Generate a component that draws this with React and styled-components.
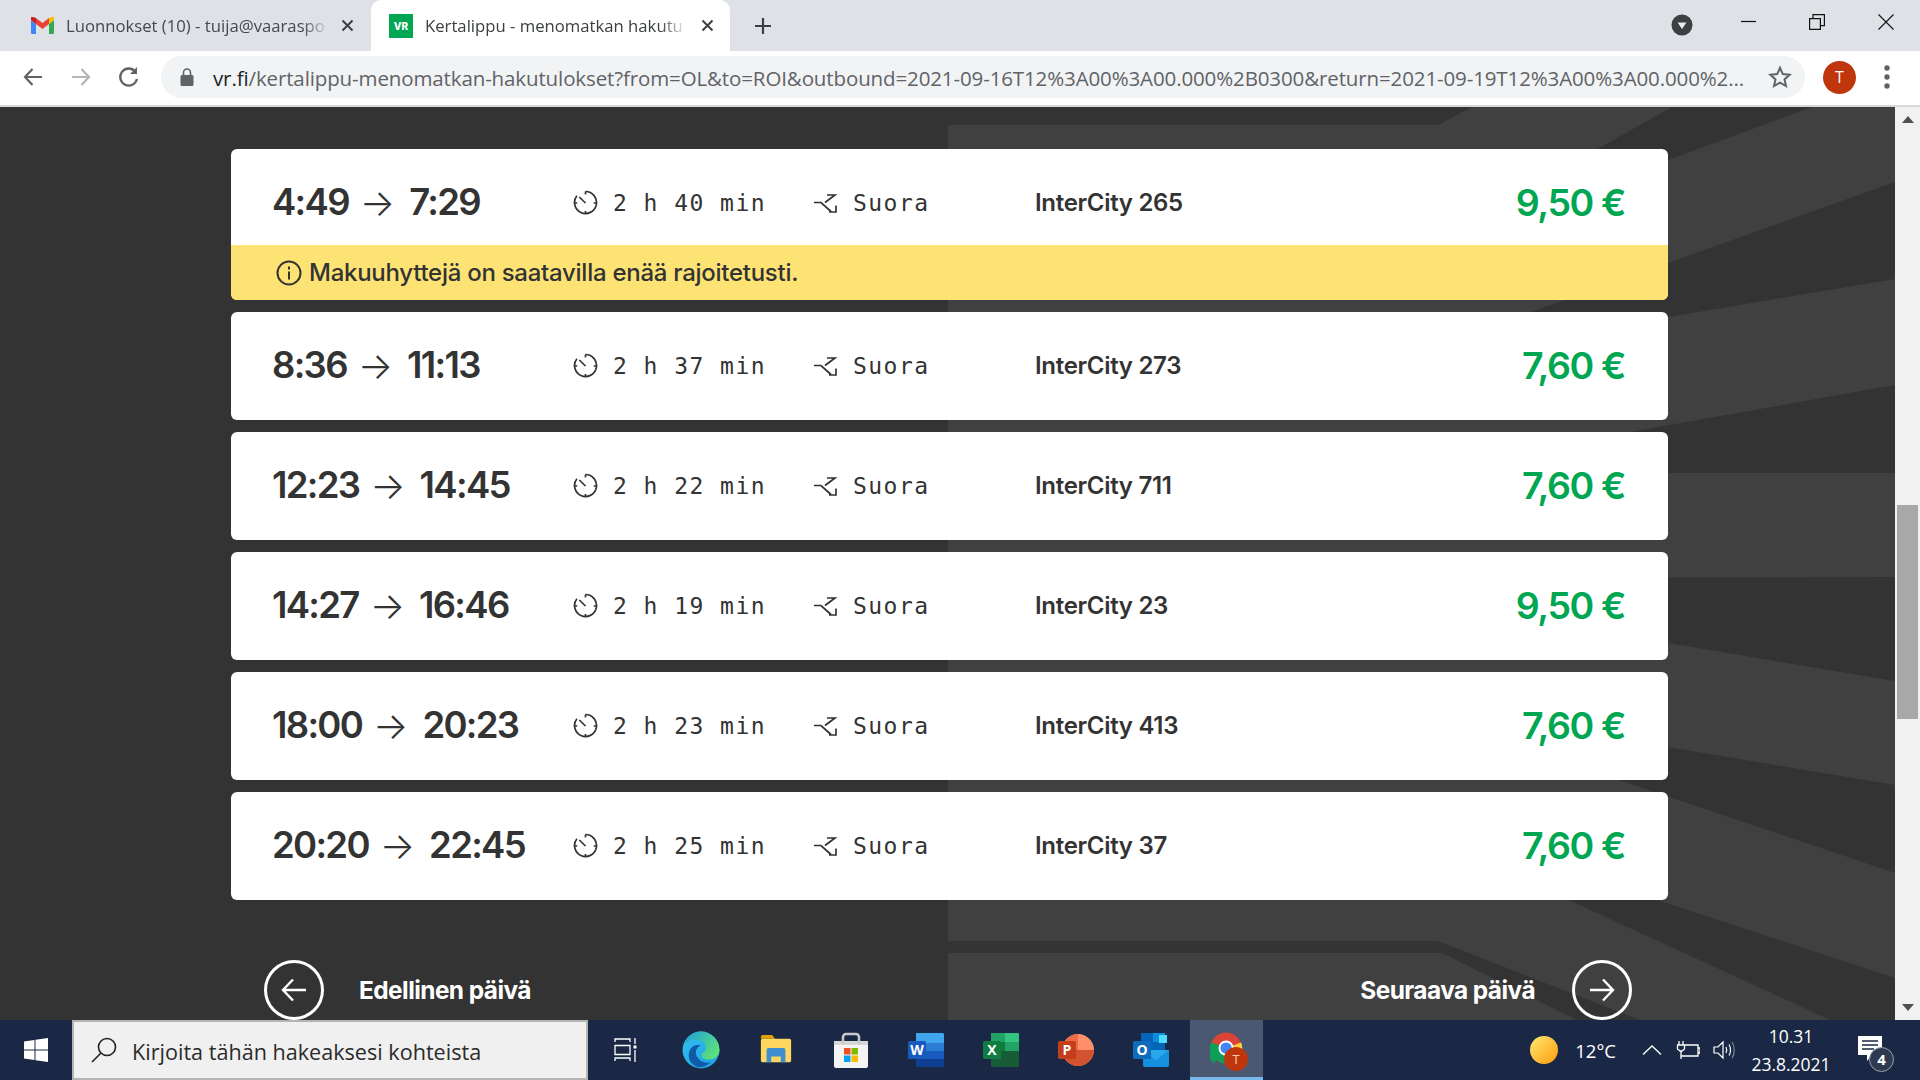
import React from "react";
import styled, { createGlobalStyle } from "styled-components";

const Global = createGlobalStyle`
  html, body { margin: 0; padding: 0; background: #333; }
  body { font-family: "Inter", "Liberation Sans", sans-serif; overflow: hidden; }
  * { box-sizing: border-box; }
`;

const Screen = styled.div`
  width: 1920px;
  height: 1080px;
  display: flex;
  flex-direction: column;
  overflow: hidden;
`;

/* browser chrome */
const TabStrip = styled.div`
  height: 51px;
  background: #dee1e6;
  display: flex;
  align-items: stretch;
  flex: none;
`;

const Tab = styled.div`
  width: ${(p) => p.$w}px;
  padding-left: ${(p) => p.$pl}px;
  display: flex;
  align-items: center;
  background: ${(p) => (p.$active ? "#fff" : "transparent")};
  border-radius: 10px 10px 0 0;
`;

const TabTitle = styled.span`
  width: ${(p) => p.$w}px;
  margin-left: ${(p) => p.$ml}px;
  font: 400 16.7px "Open Sans", sans-serif;
  color: ${(p) => (p.$active ? "#3c4043" : "#45494e")};
  white-space: nowrap;
  -webkit-mask-image: linear-gradient(to right, #000 90%, transparent 100%);
  mask-image: linear-gradient(to right, #000 90%, transparent 100%);
`;

const TabClose = styled.svg`
  width: 13px;
  height: 13px;
  margin-left: ${(p) => p.$ml}px;
  flex: none;
`;

const NewTab = styled.svg`
  width: 20px;
  height: 20px;
  margin: 16px 0 0 23px;
`;

const WindowControls = styled.div`
  margin-left: auto;
  display: flex;
  align-items: flex-start;
`;

const Extension = styled.svg`
  width: 22px;
  height: 22px;
  margin: 14px 48px 0 0;
`;

const WindowBtn = styled.svg`
  width: 16px;
  height: 16px;
  margin: 14px ${(p) => p.$mr}px 0 0;
`;

const Toolbar = styled.div`
  height: 56px;
  flex: none;
  background: #fff;
  border-bottom: 2px solid #d6d8dc;
  display: flex;
  align-items: center;
  padding-bottom: 2px;
  padding-left: 20px;
`;

const NavIcon = styled.svg`
  width: 26px;
  height: 26px;
  margin-right: ${(p) => p.$mr}px;
  flex: none;
`;

const AddressBar = styled.div`
  width: 1644px;
  height: 42px;
  margin-left: 19px;
  border-radius: 21px;
  background: #f1f3f4;
  display: flex;
  align-items: center;
  padding-left: 19px;
`;

const Lock = styled.svg`
  width: 14px;
  height: 18px;
  margin-right: 19px;
  flex: none;
`;

const Url = styled.div`
  width: 1531px;
  padding-top: 2px;
  font: 400 20.5px "Open Sans", sans-serif;
  letter-spacing: -0.12px;
  color: #5f6368;
  white-space: nowrap;
  overflow: hidden;
`;

const UrlHost = styled.span`
  color: #202124;
`;

const Star = styled.svg`
  width: 24px;
  height: 24px;
  margin-left: 24px;
  flex: none;
`;

const Avatar = styled.div`
  width: 33px;
  height: 33px;
  margin: 0 28px 0 18px;
  border-radius: 50%;
  background: #bf360c;
  color: #fff;
  font: 400 16px "Open Sans", sans-serif;
  display: flex;
  align-items: center;
  justify-content: center;
  flex: none;
`;

const Dots = styled.svg`
  width: 6px;
  height: 26px;
  flex: none;
`;

/* page */
const Viewport = styled.div`
  height: 913px;
  flex: none;
  display: flex;
`;

const Page = styled.main`
  position: relative;
  width: 1895px;
  height: 913px;
  overflow: hidden;
  padding: 42px 0 0 231px;
  background: #333;
`;

const Backdrop = styled.svg`
  position: absolute;
  left: 0;
  top: 0;
`;

const Results = styled.div`
  position: relative;
  width: 1437px;
  display: flex;
  flex-direction: column;
  gap: 12px;
`;

const Card = styled.article`
  background: #fff;
  border-radius: 6px;
  overflow: hidden;
`;

const Row = styled.div`
  height: ${(p) => (p.$notice ? 96 : 108)}px;
  padding: ${(p) => (p.$notice ? "10px 43px 0 41px" : "0 43px 2px 41px")};
  display: grid;
  grid-template-columns: 301px 240px 222px 1fr auto;
  align-items: center;
  color: #333;
`;

const Times = styled.div`
  display: flex;
  align-items: center;
  font-size: 36.5px;
  font-weight: 600;
  letter-spacing: -1.7px;
  white-space: nowrap;
`;

const ArrowGlyph = styled.span`
  font-size: 37px;
  font-weight: 300;
  letter-spacing: 0;
  margin: 0 14px 0 11px;
`;

const Meta = styled.div`
  display: flex;
  align-items: center;
`;

const MetaText = styled.span`
  margin-left: ${(p) => p.$ml}px;
  padding-top: 2px;
  font: 400 23px "DejaVu Sans Mono", monospace;
  letter-spacing: 1.45px;
  white-space: nowrap;
`;

const MetaIcon = styled.svg`
  width: 25px;
  height: 25px;
  flex: none;
`;

const Train = styled.div`
  font-size: 24px;
  font-weight: 600;
  letter-spacing: -0.3px;
`;

const Price = styled.div`
  font-size: 37.5px;
  font-weight: 600;
  letter-spacing: -1.4px;
  color: #00a651;
`;

const Notice = styled.div`
  height: 55px;
  background: #fde374;
  display: flex;
  align-items: center;
  padding-left: 45px;
  color: #333;
  font-size: 24px;
  font-weight: 500;
  letter-spacing: -0.27px;
`;

const NoticeIcon = styled.svg`
  width: 26px;
  height: 26px;
  margin-right: 7px;
  flex: none;
`;

const DayNav = styled.nav`
  position: relative;
  width: 1437px;
  margin-top: 60px;
  padding: 0 36px 0 33px;
  display: flex;
  justify-content: space-between;
`;

const DayLink = styled.a`
  display: flex;
  align-items: center;
  gap: ${(p) => p.$gap}px;
  color: #fff;
  font-size: 24.4px;
  font-weight: 700;
  letter-spacing: -0.55px;
`;

const DayCircle = styled.span`
  width: 60px;
  height: 60px;
  border: 3px solid #fff;
  border-radius: 50%;
  display: flex;
  align-items: center;
  justify-content: center;
`;

const Scrollbar = styled.div`
  width: 25px;
  background: #f1f1f1;
  display: flex;
  flex-direction: column;
  align-items: center;
  justify-content: space-between;
  padding: 9px 0 9px;
`;

const ScrollTrack = styled.div`
  flex: 1;
  width: 100%;
  padding: 382px 2px 0;
`;

const ScrollThumb = styled.div`
  height: 214px;
  background: #a8a8a8;
`;

const Caret = styled.div`
  width: 0;
  height: 0;
  border-left: 6px solid transparent;
  border-right: 6px solid transparent;
  ${(p) => (p.$up ? "border-bottom" : "border-top")}: 7px solid #505050;
`;

/* taskbar */
const Taskbar = styled.footer`
  height: 60px;
  flex: none;
  background: #1a2845;
  display: flex;
  align-items: stretch;
  position: relative;
  z-index: 1;
`;

const StartBtn = styled.div`
  width: 72px;
  display: flex;
  align-items: center;
  justify-content: center;
`;

const SearchBox = styled.div`
  width: 516px;
  background: #f0f0f0;
  border: 2px solid #b4b4b4;
  display: flex;
  align-items: center;
  padding-left: 17px;
  font: 400 21.6px "Open Sans", sans-serif;
  color: #2b2b2b;
`;

const SearchLabel = styled.span`
  padding-top: 2px;
`;

const SearchIcon = styled.svg`
  width: 26px;
  height: 26px;
  margin-right: 15px;
`;

const TaskSlot = styled.div`
  width: ${(p) => (p.$active ? 73 : 75)}px;
  margin-left: ${(p) => (p.$active ? 2 : 0)}px;
  display: flex;
  align-items: center;
  justify-content: center;
  position: relative;
  background: ${(p) => (p.$active ? "#4a5872" : "transparent")};
  border-bottom: ${(p) => (p.$active ? "3px solid #76b9ed" : "none")};
`;

const TaskOverlay = styled.span`
  position: absolute;
  left: 34px;
  top: 27px;
  width: 24px;
  height: 24px;
  border-radius: 50%;
  background: #bf360c;
  color: #f3c9b8;
  font: 400 13px "Open Sans", sans-serif;
  display: flex;
  align-items: center;
  justify-content: center;
`;

const Tray = styled.div`
  margin-left: auto;
  display: flex;
  align-items: center;
  color: #fff;
  padding-right: 38px;
  font: 400 18.5px "Open Sans", sans-serif;
`;

const TrayIcon = styled.svg`
  margin-left: ${(p) => p.$ml}px;
  flex: none;
`;

const Sun = styled.span`
  width: 28px;
  height: 28px;
  border-radius: 50%;
  background: linear-gradient(135deg, #ffe873, #fd9c0a);
  flex: none;
`;

const Temp = styled.span`
  margin-left: 17px;
`;

const ClockBox = styled.div`
  width: 78px;
  margin-left: 17px;
  display: flex;
  flex-direction: column;
  align-items: center;
  gap: 6px;
  font-size: 17.5px;
  line-height: 22px;
  white-space: nowrap;
`;

const Notif = styled.div`
  position: relative;
  width: 24px;
  height: 26px;
  margin-left: 28px;
  margin-top: -3px;
`;

const NotifBadge = styled.span`
  position: absolute;
  left: 11px;
  top: 11px;
  width: 25px;
  height: 25px;
  border-radius: 50%;
  background: #2f3a50;
  border: 1px solid #9aa0ab;
  color: #fff;
  font: 700 15px "Open Sans", sans-serif;
  display: flex;
  align-items: center;
  justify-content: center;
`;

const departures = [
  { from: "4:49", to: "7:29", dur: "2 h 40 min", train: "InterCity 265", price: "9,50 €", notice: "Makuuhyttejä on saatavilla enää rajoitetusti." },
  { from: "8:36", to: "11:13", dur: "2 h 37 min", train: "InterCity 273", price: "7,60 €" },
  { from: "12:23", to: "14:45", dur: "2 h 22 min", train: "InterCity 711", price: "7,60 €" },
  { from: "14:27", to: "16:46", dur: "2 h 19 min", train: "InterCity 23", price: "9,50 €" },
  { from: "18:00", to: "20:23", dur: "2 h 23 min", train: "InterCity 413", price: "7,60 €" },
  { from: "20:20", to: "22:45", dur: "2 h 25 min", train: "InterCity 37", price: "7,60 €" },
];

const CloseX = ({ ml }) => (
  <TabClose $ml={ml} viewBox="0 0 13 13">
    <path d="M1.5 1.5l10 10M11.5 1.5l-10 10" stroke="#3c4043" strokeWidth="2" />
  </TabClose>
);

const ClockIcon = () => (
  <MetaIcon viewBox="0 0 25 25" fill="none" stroke="#333" strokeWidth="1.7">
    <path d="M12.5 1.5a11 11 0 1 1-8.6 4.2" />
    <path d="M12.5 1.5v3M23.5 13h-2.8M12.5 24v-3M1.5 13h2.8M6.3 7l6.2 6" />
  </MetaIcon>
);

const RouteIcon = () => (
  <MetaIcon viewBox="0 0 25 25" fill="none" stroke="#333" strokeWidth="1.7">
    <path d="M1 12.5h7l10 9M14 5h8l-10 7.5M23 15.5v6.5h-7" />
  </MetaIcon>
);

const Backdrops = () => (
  <Backdrop width="1895" height="913" viewBox="0 107 1895 913">
    <polygon fill="#404040" points="948,125 1438,125 1472,107 1895,107 1895,1020 948,1020" />
    <g fill="#333">
      <polygon points="1672,107 1812,107 1560,200 1560,170" />
      <polygon points="1895,182 1500,323 1500,345 1895,279" />
      <polygon points="1895,385 1500,455 1500,473 1895,473" />
      <polygon points="1400,578 1895,577 1895,681 1400,598" />
      <polygon points="1895,785 1500,719 1500,740 1895,873" />
      <polygon points="1895,978 1895,1020 1830,1020 1560,896 1560,868" />
      <polygon points="948,941 1438,941 1640,1020 1577,1020 1442,953 948,953" />
    </g>
  </Backdrop>
);

const AppSvg = ({ size = 36, children }) => (
  <svg width={size} height={size} viewBox="0 0 36 36">{children}</svg>
);

const OfficeBadge = ({ fill, letter }) => (
  <>
    <rect x="0" y="9" width="18" height="18" rx="1.5" fill={fill} />
    <text x="9" y="23" fill="#fff" fontFamily="Open Sans" fontSize="14" fontWeight="700" textAnchor="middle">{letter}</text>
  </>
);

export default function App() {
  return (
    <Screen>
      <Global />
      <TabStrip>
        <Tab $w={371} $pl={31}>
          <svg width="23" height="17" viewBox="0 0 23 17" style={{ flex: "none" }}>
            <path d="M0 3v12.5A1.5 1.5 0 0 0 1.5 17H5V7z" fill="#4285f4" />
            <path d="M18 7v10h3.5a1.5 1.5 0 0 0 1.5-1.5V3z" fill="#34a853" />
            <path d="M0 3l5 4V1L3 .3A2 2 0 0 0 0 3z" fill="#c5221f" />
            <path d="M5 1v6l6.5 5L18 7V1l-6.5 5z" fill="#ea4335" />
            <path d="M18 1v6l5-4a2 2 0 0 0-3-2.7z" fill="#fbbc04" />
          </svg>
          <TabTitle $w={263} $ml={12}>Luonnokset (10) - tuija@vaaraspo</TabTitle>
          <CloseX ml={12} />
        </Tab>
        <Tab $w={359} $pl={18} $active>
          <svg width="24" height="24" viewBox="0 0 24 24" style={{ flex: "none" }}>
            <rect width="24" height="24" fill="#00a651" />
            <text x="12" y="16" fill="#fff" fontFamily="Inter" fontSize="10" fontWeight="800" textAnchor="middle">VR</text>
          </svg>
          <TabTitle $active $w={262} $ml={12}>Kertalippu - menomatkan hakutu</TabTitle>
          <CloseX ml={14} />
        </Tab>
        <NewTab viewBox="0 0 20 20">
          <path d="M10 2v16M2 10h16" stroke="#3c4043" strokeWidth="2.2" />
        </NewTab>
        <WindowControls>
          <Extension viewBox="0 0 22 22">
            <circle cx="11" cy="11" r="10.5" fill="#3c4043" />
            <path d="M6.5 8.5h9L11 15z" fill="#e8eaed" />
          </Extension>
          <WindowBtn $mr={52} viewBox="0 0 16 16">
            <path d="M0 7.5h15" stroke="#111" strokeWidth="1.2" />
          </WindowBtn>
          <WindowBtn $mr={53} viewBox="0 0 16 16" fill="none" stroke="#111" strokeWidth="1.2">
            <path d="M.6 4.6h10.800v10.800H.6zM4 4.600V.6h11.400v11h-4" />
          </WindowBtn>
          <WindowBtn $mr={26} viewBox="0 0 16 16">
            <path d="M.5.5l15 15M15.5.5l-15 15" stroke="#111" strokeWidth="1.1" />
          </WindowBtn>
        </WindowControls>
      </TabStrip>

      <Toolbar>
        <NavIcon $mr={22} viewBox="0 0 26 26" fill="none" stroke="#5f6368" strokeWidth="2.2">
          <path d="M22 13H5M12.5 5L5 13l7.500 8" />
        </NavIcon>
        <NavIcon $mr={22} viewBox="0 0 26 26" fill="none" stroke="#b4b6b9" strokeWidth="2.2">
          <path d="M4 13h17M13.5 5L21 13l-7.500 8" />
        </NavIcon>
        <NavIcon $mr={0} viewBox="0 0 26 26" fill="none" stroke="#5f6368" strokeWidth="2.3">
          <path d="M21 15a8.5 8.5 0 1 1-1.800-7.500" />
          <path d="M21 3v7h-7" fill="#5f6368" stroke="none" />
        </NavIcon>
        <AddressBar>
          <Lock viewBox="0 0 14 18">
            <path d="M2 7h10a1.5 1.5 0 0 1 1.5 1.5v8A1.5 1.5 0 0 1 12 18H2a1.500 1.500 0 0 1-1.500-1.500v-8A1.500 1.500 0 0 1 2 7z" fill="#5f6368" />
            <path d="M3.5 7V4.500a3.500 3.500 0 0 1 7 0V7" fill="none" stroke="#5f6368" strokeWidth="1.6" />
          </Lock>
          <Url>
            <UrlHost>vr.fi</UrlHost>/kertalippu-menomatkan-hakutulokset?from=OL&amp;to=ROI&amp;outbound=2021-09-16T12%3A00%3A00.000%2B0300&amp;return=2021-09-19T12%3A00%3A00.000%2...
          </Url>
          <Star viewBox="0 0 24 24" fill="none" stroke="#5f6368" strokeWidth="2">
            <path d="M12 2.800l2.800 6.300 6.800.7-5.100 4.600 1.500 6.700-6-3.500-6 3.500 1.500-6.700-5.100-4.600 6.800-.7z" />
          </Star>
        </AddressBar>
        <Avatar>T</Avatar>
        <Dots viewBox="0 0 6 26" fill="#5f6368">
          <circle cx="3" cy="4" r="2.7" />
          <circle cx="3" cy="13" r="2.7" />
          <circle cx="3" cy="22" r="2.7" />
        </Dots>
      </Toolbar>

      <Viewport>
        <Page>
          <Backdrops />
          <Results>
            {departures.map((d) => (
              <Card key={d.train}>
                <Row $notice={!!d.notice}>
                  <Times>
                    {d.from}
                    <ArrowGlyph>→</ArrowGlyph>
                    {d.to}
                  </Times>
                  <Meta>
                    <ClockIcon />
                    <MetaText $ml={15}>{d.dur}</MetaText>
                  </Meta>
                  <Meta>
                    <RouteIcon />
                    <MetaText $ml={15}>Suora</MetaText>
                  </Meta>
                  <Train>{d.train}</Train>
                  <Price>{d.price}</Price>
                </Row>
                {d.notice && (
                  <Notice>
                    <NoticeIcon viewBox="0 0 26 26" fill="none" stroke="#333" strokeWidth="2">
                      <circle cx="13" cy="13" r="11.5" />
                      <path d="M13 11.5v8M13 6.5v3" />
                    </NoticeIcon>
                    {d.notice}
                  </Notice>
                )}
              </Card>
            ))}
          </Results>
          <DayNav>
            <DayLink $gap={35}>
              <DayCircle>
                <svg width="28" height="28" viewBox="0 0 28 28" fill="none" stroke="#fff" strokeWidth="2.4">
                  <path d="M26 14H3M13 3.5L3 14l10 10.5" />
                </svg>
              </DayCircle>
              Edellinen päivä
            </DayLink>
            <DayLink $gap={37}>
              Seuraava päivä
              <DayCircle>
                <svg width="28" height="28" viewBox="0 0 28 28" fill="none" stroke="#fff" strokeWidth="2.4">
                  <path d="M2 14h23M15 3.5L25 14 15 24.5" />
                </svg>
              </DayCircle>
            </DayLink>
          </DayNav>
        </Page>
        <Scrollbar>
          <Caret $up />
          <ScrollTrack>
            <ScrollThumb />
          </ScrollTrack>
          <Caret />
        </Scrollbar>
      </Viewport>

      <Taskbar>
        <StartBtn>
          <svg width="24" height="24" viewBox="0 0 24 24" fill="#fff">
            <path d="M0 3.5l10.500-1.500v9.500H0zM11.500 1.800L24 0v11.500H11.500zM0 12.500h10.500V22L0 20.500zM11.500 12.500H24V24l-12.500-1.800z" />
          </svg>
        </StartBtn>
        <SearchBox>
          <SearchIcon viewBox="0 0 26 26" fill="none" stroke="#222" strokeWidth="1.6">
            <circle cx="16" cy="10" r="8.5" />
            <path d="M10 16L1 25" />
          </SearchIcon>
          <SearchLabel>Kirjoita tähän hakeaksesi kohteista</SearchLabel>
        </SearchBox>
        <TaskSlot>
          <svg width="24" height="24" viewBox="0 0 24 24" fill="none" stroke="#fff" strokeWidth="1.3">
            <path d="M1 4V1h15v3M1 7.5h15v9H1zM1 23v-3h15v3M21 0v6M21 12v12" />
            <rect x="19.5" y="7.5" width="3" height="3" fill="#fff" stroke="none" />
          </svg>
        </TaskSlot>
        <TaskSlot>
          <AppSvg size={38}>
            <defs>
              <linearGradient id="edgeA" x1="0" y1="0" x2="1" y2="1">
                <stop offset="0" stopColor="#35c1f1" />
                <stop offset="1" stopColor="#1b9de2" />
              </linearGradient>
              <linearGradient id="edgeB" x1="0" y1="0" x2="1" y2="0.6">
                <stop offset="0" stopColor="#1b9de2" />
                <stop offset="1" stopColor="#5be07a" />
              </linearGradient>
            </defs>
            <circle cx="18" cy="18" r="17.5" fill="url(#edgeA)" />
            <path d="M18 .5A17.5 17.5 0 0 1 35.500 18c0 6-5 9-10 9-4 0-7-1-7-4 0-3 4-3 4-7 0-5-5-8-10-8S4 11 1.500 13C4 6 10 .5 18 .5z" fill="url(#edgeB)" />
            <path d="M14 34c-6-3-9-8-7-15 2-5 7-7 11-5-4 1-6 5-4 10 2 4 7 7 13 6-4 3-9 5-13 4z" fill="#0f5ba8" />
          </AppSvg>
        </TaskSlot>
        <TaskSlot>
          <AppSvg size={34}>
            <path d="M2 4a2 2 0 0 1 2-2h10l3 4H2z" fill="#e0a200" />
            <rect x="2" y="6" width="32" height="25" rx="2" fill="#ffd75e" />
            <path d="M8 31V18a2 2 0 0 1 2-2h16a2 2 0 0 1 2 2v13h-5v-6H13v6z" fill="#3f8fd2" />
          </AppSvg>
        </TaskSlot>
        <TaskSlot>
          <AppSvg>
            <path d="M1 10h34v24a2 2 0 0 1-2 2H3a2 2 0 0 1-2-2z" fill="#f4f4f4" />
            <rect x="1" y="9" width="34" height="4" fill="#d8d8d8" />
            <path d="M10 12V5a3 3 0 0 1 3-3h10a3 3 0 0 1 3 3v7" fill="none" stroke="#c9c9c9" strokeWidth="2.5" />
            <rect x="11" y="16" width="6.5" height="6.5" fill="#f25022" />
            <rect x="18.5" y="16" width="6.5" height="6.5" fill="#7fba00" />
            <rect x="11" y="23.5" width="6.5" height="6.5" fill="#00a4ef" />
            <rect x="18.5" y="23.5" width="6.5" height="6.5" fill="#ffb900" />
          </AppSvg>
        </TaskSlot>
        <TaskSlot>
          <AppSvg>
            <path d="M8 1h26a2 2 0 0 1 2 1v9H8z" fill="#41a5ee" />
            <rect x="8" y="11" width="28" height="8" fill="#2b7cd3" />
            <rect x="8" y="19" width="28" height="8" fill="#185abd" />
            <path d="M8 27h28v7a1 1 0 0 1-1 1H9a1 1 0 0 1-1-1z" fill="#103f91" />
            <OfficeBadge fill="#185abd" letter="W" />
          </AppSvg>
        </TaskSlot>
        <TaskSlot>
          <AppSvg>
            <path d="M8 1h14v9H8z" fill="#21a366" />
            <path d="M22 1h13a1 1 0 0 1 1 1v8H22z" fill="#33c481" />
            <rect x="8" y="10" width="14" height="9" fill="#107c41" />
            <rect x="22" y="10" width="14" height="9" fill="#21a366" />
            <path d="M8 19h28v15a1 1 0 0 1-1 1H9a1 1 0 0 1-1-1z" fill="#185c37" />
            <OfficeBadge fill="#107c41" letter="X" />
          </AppSvg>
        </TaskSlot>
        <TaskSlot>
          <AppSvg>
            <circle cx="20" cy="18" r="16" fill="#ff8f6b" />
            <path d="M20 2A16 16 0 0 0 4 18h16z" fill="#ed6c47" />
            <path d="M4 18a16 16 0 0 0 32 0z" fill="#d35230" />
            <OfficeBadge fill="#c43e1c" letter="P" />
          </AppSvg>
        </TaskSlot>
        <TaskSlot>
          <AppSvg>
            <rect x="8" y="1" width="24" height="18" rx="1" fill="#0364b8" />
            <rect x="20" y="1" width="12" height="9" fill="#0a8fdb" />
            <rect x="26" y="3" width="8" height="8" fill="#50d9ff" />
            <path d="M10 18h26v15a2 2 0 0 1-2 2H12a2 2 0 0 1-2-2z" fill="#1490df" />
            <path d="M10 18l26 0v0L23 28z" fill="#28a8ea" />
            <OfficeBadge fill="#0f6cbd" letter="O" />
          </AppSvg>
        </TaskSlot>
        <TaskSlot $active>
          <AppSvg size={34}>
            <circle cx="17" cy="17" r="16.5" fill="#db4437" />
            <path d="M17 17L4 33a16.500 16.500 0 0 1-2.500-22z" fill="#0f9d58" />
            <path d="M17 17L33 11a16.500 16.500 0 0 1-16 22.500z" fill="#ffcd40" />
            <path d="M17 33.5A16.500 16.500 0 0 1 4 27l7-10 6 0z" fill="#0f9d58" />
            <circle cx="17" cy="17" r="8" fill="#fff" />
            <circle cx="17" cy="17" r="6" fill="#4285f4" />
          </AppSvg>
          <TaskOverlay>T</TaskOverlay>
        </TaskSlot>
        <Tray>
          <Sun />
          <Temp>12°C</Temp>
          <TrayIcon $ml={26} width="20" height="10" viewBox="0 0 20 10" fill="none" stroke="#fff" strokeWidth="1.3">
            <path d="M1 9.5L10 1l9 8.500" />
          </TrayIcon>
          <TrayIcon $ml={14} width="24" height="18" viewBox="0 0 24 18" fill="none" stroke="#fff" strokeWidth="1.3">
            <path d="M8 4h14v11H8M22 7h2v5h-2M3 0v4M7 0v4M1.500 4h7v4l-2.500 2H4L1.500 8zM5 10v8M5 15h6" />
          </TrayIcon>
          <TrayIcon $ml={13} width="22" height="22" viewBox="0 0 22 22" fill="none" stroke="#fff" strokeWidth="1.2">
            <path d="M1 8h4l5-5v16l-5-5H1zM13 8c1 2 1 4 0 6M16 5.500c2 3 2 8 0 11" />
            <path d="M19 3c3 4 3 12 0 16" stroke="#7e8797" />
          </TrayIcon>
          <ClockBox>
            <span>10.31</span>
            <span>23.8.2021</span>
          </ClockBox>
          <Notif>
            <svg width="24" height="26" viewBox="0 0 24 26" fill="#fff">
              <path d="M0 0h24v19H14l-5 6v-6H0z" />
              <path d="M4 5h16M4 9h16M4 13h12" stroke="#1a2845" strokeWidth="1.3" />
            </svg>
            <NotifBadge>4</NotifBadge>
          </Notif>
        </Tray>
      </Taskbar>
    </Screen>
  );
}
